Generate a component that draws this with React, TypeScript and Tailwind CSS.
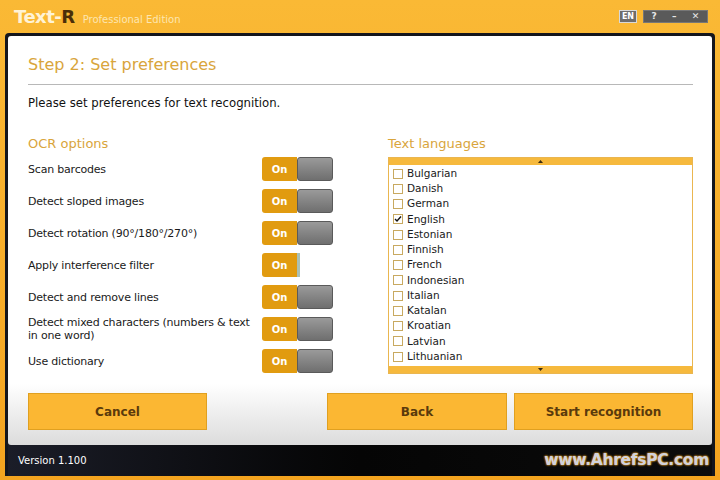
import React from "react";

const options = [
  "Scan barcodes",
  "Detect sloped images",
  "Detect rotation (90°/180°/270°)",
  "Apply interference filter",
  "Detect and remove lines",
  "Detect mixed characters (numbers & text in one word)",
  "Use dictionary",
];

const languages = [
  "Bulgarian",
  "Danish",
  "German",
  "English",
  "Estonian",
  "Finnish",
  "French",
  "Indonesian",
  "Italian",
  "Katalan",
  "Kroatian",
  "Latvian",
  "Lithuanian",
];

function Toggle({ glitch }: { glitch?: boolean }) {
  return (
    <div className="relative flex h-[24px] w-[71px] shrink-0 rounded-[3px]">
      <div className="flex w-[35px] items-center justify-center rounded-l-[3px] bg-[#e19b10] text-[10px] font-bold text-white">
        On
      </div>
      {glitch ? (
        <div className="flex-1 rounded-r-[3px] border-l-[3px] border-[#a9c0b6] bg-white" />
      ) : (
        <div className="flex-1 rounded-[3px] border border-[#5a5a5a] bg-gradient-to-b from-[#9a9a9a] to-[#6f6f6f]" />
      )}
      {glitch && <div className="absolute -top-[2px] left-[40px] h-[22px] w-[36px] bg-white" />}
    </div>
  );
}

export default function App() {
  return (
    <div
      className="flex h-[480px] w-[720px] flex-col overflow-hidden bg-gradient-to-b from-[#fab935] to-[#f4a41f]"
      style={{ fontFamily: '"DejaVu Sans", Tahoma, sans-serif' }}
    >
      {/* Title bar */}
      <div className="flex h-[33px] shrink-0 items-center pl-[14px] pr-[12px]">
        <div className="flex items-baseline gap-[8px]">
          <span className="text-[18px] font-bold tracking-[-0.5px] text-[#fff3d6]">
            Text-<span className="text-[#4a2e08]">R</span>
          </span>
          <span className="text-[10px] text-[#fde6b0]">Professional Edition</span>
        </div>
        <div className="ml-auto flex items-center gap-[6px]">
          <div className="flex h-[13px] w-[18px] items-center justify-center border border-[#d8d8d8] bg-[#6d6d6d] text-[8px] font-bold text-white">
            EN
          </div>
          <div className="flex h-[13px] w-[65px] items-center justify-around border border-[#777] bg-[#5a5a5a] text-[9px] font-bold text-[#e8e8e8]">
            <span>?</span>
            <span>–</span>
            <span>✕</span>
          </div>
        </div>
      </div>

      {/* Dark frame */}
      <div className="mx-[5px] mb-[4px] flex flex-1 flex-col rounded-t-[4px] bg-[#14161d] px-[3px] pt-[3px]">
        {/* White content */}
        <div className="flex flex-1 flex-col rounded-[3px] bg-gradient-to-b from-white from-[85%] to-[#dcdcdc] pl-[20px] pr-[19px] pt-[18px] pb-[15px]">
          <div className="h-[22px] text-[16px] leading-[22px] text-[#d9a53c]">Step 2: Set preferences</div>
          <div className="mt-[8px] h-px bg-[#b8b8b8]" />
          <div className="mt-[10px] h-[16px] text-[11.7px] leading-[16px] text-[#111]">
            Please set preferences for text recognition.
          </div>

          <div className="mt-[24px] flex justify-between">
            {/* OCR options */}
            <div className="w-[305px]">
              <div className="h-[18px] text-[13px] leading-[18px] text-[#d9a53c]">OCR options</div>
              <div className="flex flex-col">
                {options.map((o, i) => (
                  <div key={o} className="flex h-[32px] items-center justify-between">
                    <span className="w-[228px] text-[11px] leading-[13px] tracking-[-0.2px] text-[#1a1a1a]">{o}</span>
                    <Toggle glitch={i === 3} />
                  </div>
                ))}
              </div>
            </div>

            {/* Text languages */}
            <div className="w-[305px]">
              <div className="h-[18px] text-[13px] leading-[18px] text-[#d9a53c]">Text languages</div>
              <div className="mt-[4px] flex h-[217px] flex-col border border-[#eab650] bg-white">
                <div className="flex h-[7px] items-center justify-center bg-[#f6b93d]">
                  <svg width="5" height="3" viewBox="0 0 5 3">
                    <path d="M0 3 L2.5 0 L5 3 Z" fill="#3a2a10" />
                  </svg>
                </div>
                <div className="flex flex-1 flex-col pl-[4px] pt-[1px]">
                  {languages.map((l) => (
                    <div key={l} className="flex h-[15.25px] items-center gap-[4px]">
                      <div className="flex h-[10px] w-[10px] items-center justify-center border border-[#c8a960] bg-white">
                        {l === "English" && (
                          <svg width="8" height="8" viewBox="0 0 8 8">
                            <path d="M1 4 L3 6 L7 1.5" stroke="#111" strokeWidth="1.4" fill="none" />
                          </svg>
                        )}
                      </div>
                      <span className="text-[10.5px] text-[#1a1a1a]">{l}</span>
                    </div>
                  ))}
                </div>
                <div className="flex h-[7px] items-center justify-center bg-[#f6b93d]">
                  <svg width="5" height="3" viewBox="0 0 5 3">
                    <path d="M0 0 L2.5 3 L5 0 Z" fill="#3a2a10" />
                  </svg>
                </div>
              </div>
            </div>
          </div>

          {/* Buttons */}
          <div className="mt-auto flex justify-between">
            <button className="h-[37px] w-[179px] border border-[#e0a020] bg-[#fbb733] text-[12px] font-bold text-[#5a3a0c]">
              Cancel
            </button>
            <div className="flex gap-[7px]">
              <button className="h-[37px] w-[180px] border border-[#e0a020] bg-[#fbb733] text-[12px] font-bold text-[#5a3a0c]">
                Back
              </button>
              <button className="h-[37px] w-[179px] border border-[#e0a020] bg-[#fbb733] text-[12px] font-bold text-[#5a3a0c]">
                Start recognition
              </button>
            </div>
          </div>
        </div>

        {/* Footer */}
        <div className="flex h-[31px] shrink-0 items-center bg-gradient-to-r from-[#1b1d28] via-[#050505] to-[#0c0c0c] pl-[10px] pr-[3px]">
          <span className="text-[10px] text-white">Version 1.100</span>
          <span className="ml-auto text-[15.5px] font-bold tracking-[-0.3px] text-[#cfd2dc] [text-shadow:0_0_2px_#f0a020,0_0_2px_#f0a020]">
            www.AhrefsPC.com
          </span>
        </div>
      </div>
    </div>
  );
}
